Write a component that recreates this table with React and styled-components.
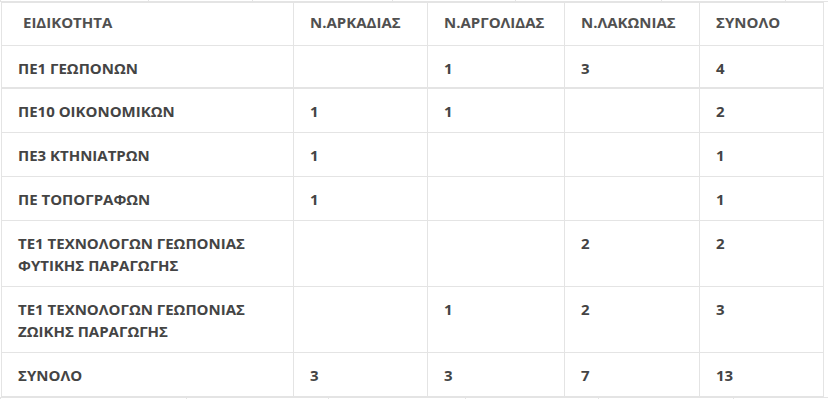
import styled, { createGlobalStyle } from "styled-components";

const GlobalStyle = createGlobalStyle`
  html, body {
    margin: 0;
    padding: 0;
    background: #ffffff;
  }
  body {
    font-family: "Open Sans", "DejaVu Sans", sans-serif;
    overflow: hidden;
  }
`;

const BORDER = "#e4e4e4";

const headers = ["ΕΙΔΙΚΟΤΗΤΑ", "Ν.ΑΡΚΑΔΙΑΣ", "Ν.ΑΡΓΟΛΙΔΑΣ", "Ν.ΛΑΚΩΝΙΑΣ", "ΣΥΝΟΛΟ"];
const widths = [292, 134, 137, 135, 124];

const rows = [
  { name: ["ΠΕ1 ΓΕΩΠΟΝΩΝ"], values: ["", "1", "3", "4"], thick: true },
  { name: ["ΠΕ10 ΟΙΚΟΝΟΜΙΚΩΝ"], values: ["1", "1", "", "2"] },
  { name: ["ΠΕ3 ΚΤΗΝΙΑΤΡΩΝ"], values: ["1", "", "", "1"] },
  { name: ["ΠΕ ΤΟΠΟΓΡΑΦΩΝ"], values: ["1", "", "", "1"] },
  { name: ["ΤΕ1 ΤΕΧΝΟΛΟΓΩΝ ΓΕΩΠΟΝΙΑΣ", "ΦΥΤΙΚΗΣ ΠΑΡΑΓΩΓΗΣ"], values: ["", "", "2", "2"] },
  { name: ["ΤΕ1 ΤΕΧΝΟΛΟΓΩΝ ΓΕΩΠΟΝΙΑΣ", "ΖΩΙΚΗΣ ΠΑΡΑΓΩΓΗΣ"], values: ["", "1", "2", "3"] },
  { name: ["ΣΥΝΟΛΟ"], values: ["3", "3", "7", "13"] },
];

// fragments of the neighbouring tables, cut by the top and bottom of the frame
const prevCols = [147, 103, 139, 122, 145, 123, 48];
const nextCols = [185, 141, 136, 132, 134, 99];

function App() {
  return (
    <Page>
      <GlobalStyle />
      <EdgeTable $top>
        <tbody>
          <tr>
            {prevCols.map((w, i) => (
              <EdgeCell key={i} style={{ width: w }} />
            ))}
          </tr>
        </tbody>
      </EdgeTable>

      <Table>
        <colgroup>
          {widths.map((w, i) => (
            <col key={i} style={{ width: w }} />
          ))}
        </colgroup>
        <thead>
          <tr>
            {headers.map((h, i) => (
              <HeadCell key={h} $first={i === 0}>
                {h}
              </HeadCell>
            ))}
          </tr>
        </thead>
        <tbody>
          {rows.map((r, i) => (
            <Row key={i} $thick={r.thick}>
              <Cell $thick={r.thick}>
                {r.name.map((line, j) => (
                  <Line key={j}>{line}</Line>
                ))}
              </Cell>
              {r.values.map((v, j) => (
                <Cell key={j} $thick={r.thick}>
                  {v}
                </Cell>
              ))}
            </Row>
          ))}
        </tbody>
      </Table>

      <EdgeTable>
        <tbody>
          <tr>
            {nextCols.map((w, i) => (
              <EdgeCell key={i} style={{ width: w }} />
            ))}
          </tr>
        </tbody>
      </EdgeTable>
    </Page>
  );
}

const Page = styled.div`
  width: 828px;
  height: 400px;
  overflow: hidden;
  padding-left: 1px;
  box-sizing: border-box;
`;

const Table = styled.table`
  border-collapse: collapse;
  table-layout: fixed;
  width: 822px;
  border: 1px solid ${BORDER};
  border-top: none;
  color: #444444;
  font-size: 15px;
  line-height: 22px;
`;

const HeadCell = styled.th`
  text-align: left;
  font-size: 15px;
  font-weight: 700;
  color: #505050;
  padding: 8px 16px 12px ${(p) => (p.$first ? "21px" : "16px")};
  border: 1px solid ${BORDER};
`;

const Row = styled.tr`
  border-bottom: ${(p) => (p.$thick ? "2px" : "1px")} solid ${BORDER};
`;

const Cell = styled.td`
  font-weight: 700;
  vertical-align: top;
  padding: 11px 16px ${(p) => (p.$thick ? "8px" : "10px")};
  border-left: 1px solid ${BORDER};
  border-right: 1px solid ${BORDER};
`;

const Line = styled.div`
  white-space: nowrap;
`;

const EdgeTable = styled.table`
  border-collapse: collapse;
  table-layout: fixed;
  width: 827px;
  margin-left: -1px;
  border-${(p) => (p.$top ? "bottom" : "top")}: 1px solid ${BORDER};
`;

const EdgeCell = styled.td`
  height: 1px;
  padding: 0;
  line-height: 0;
  font-size: 0;
  border-right: 1px solid ${BORDER};
  &:first-child {
    border-left: 1px solid ${BORDER};
  }
`;

export default App;
